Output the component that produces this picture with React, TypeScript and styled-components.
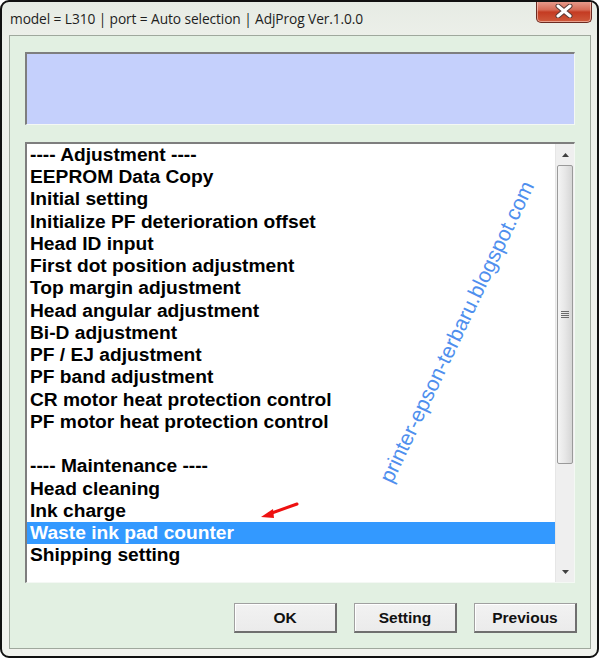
import styled, { createGlobalStyle } from "styled-components";

const GlobalStyle = createGlobalStyle`
    html, body {
        margin: 0;
        padding: 0;
        background: #ffffff;
    }
    body {
        width: 600px;
        height: 659px;
        overflow: hidden;
        font-family: "Liberation Sans", Arial, sans-serif;
    }
`;

type Row = { label: string; selected?: boolean };

const rows: Row[] = [
    { label: "---- Adjustment ----" },
    { label: "EEPROM Data Copy" },
    { label: "Initial setting" },
    { label: "Initialize PF deterioration offset" },
    { label: "Head ID input" },
    { label: "First dot position adjustment" },
    { label: "Top margin adjustment" },
    { label: "Head angular adjustment" },
    { label: "Bi-D adjustment" },
    { label: "PF / EJ adjustment" },
    { label: "PF band adjustment" },
    { label: "CR motor heat protection control" },
    { label: "PF motor heat protection control" },
    { label: "" },
    { label: "---- Maintenance ----" },
    { label: "Head cleaning" },
    { label: "Ink charge" },
    { label: "Waste ink pad counter", selected: true },
    { label: "Shipping setting" },
];

export default function App() {
    return (
        <>
            <GlobalStyle />
            <Window>
                <TitleBar>
                    <Title>model = L310 | port = Auto selection | AdjProg Ver.1.0.0</Title>
                    <CloseButton>
                        <svg width="18" height="14" viewBox="0 0 18 14">
                            <path d="M3 2 L15 12 M15 2 L3 12" stroke="#5a3a36" strokeWidth="5" strokeLinecap="round" />
                            <path d="M3 2 L15 12 M15 2 L3 12" stroke="#ffffff" strokeWidth="3" strokeLinecap="round" />
                        </svg>
                    </CloseButton>
                </TitleBar>
                <Client>
                    <StatusBox />
                    <ListBox>
                        <Items>
                            {rows.map((row, i) => (
                                <Item key={i} selected={row.selected}>{row.label || "\u00a0"}</Item>
                            ))}
                        </Items>
                        <ScrollBar>
                            <ArrowButton>
                                <svg width="7" height="4" viewBox="0 0 7 4"><path d="M0 4 L3.5 0 L7 4 Z" fill="#404040" /></svg>
                            </ArrowButton>
                            <Track>
                                <Thumb>
                                    <svg width="8" height="7" viewBox="0 0 8 7">
                                        <path d="M0 0.5 H8 M0 2.5 H8 M0 4.5 H8 M0 6.5 H8" stroke="#6a6a6a" strokeWidth="1" />
                                    </svg>
                                </Thumb>
                            </Track>
                            <ArrowButton>
                                <svg width="7" height="4" viewBox="0 0 7 4"><path d="M0 0 L3.5 4 L7 0 Z" fill="#404040" /></svg>
                            </ArrowButton>
                        </ScrollBar>
                        <Watermark>printer-epson-terbaru.blogspot.com</Watermark>
                        <Pointer width="40" height="18" viewBox="0 0 40 18">
                            <path d="M38 2 L10 12" stroke="#ee1111" strokeWidth="3" strokeLinecap="round" />
                            <path d="M2 15 L14 7 L15 16 Z" fill="#ee1111" />
                        </Pointer>
                    </ListBox>
                    <Buttons>
                        <Button>OK</Button>
                        <Button>Setting</Button>
                        <Button>Previous</Button>
                    </Buttons>
                </Client>
            </Window>
        </>
    );
}

const Window = styled.div`
    box-sizing: border-box;
    width: 599px;
    height: 658px;
    border: 2px solid #111111;
    border-radius: 9px;
    background: linear-gradient(180deg, #e6ebe4 0%, #edf0ea 6%, #f1f3ee 100%);
    display: flex;
    flex-direction: column;
    padding: 0 6px 7px 7px;
    overflow: hidden;
`;

const TitleBar = styled.div`
    height: 33px;
    display: flex;
    align-items: flex-start;
    justify-content: space-between;
    position: relative;
`;

const Title = styled.div`
    font-family: "Open Sans", "Noto Sans", sans-serif;
    font-size: 13.75px;
    color: #1e1e1e;
    padding: 7px 0 0 1px;
    letter-spacing: -0.1px;
    white-space: nowrap;
`;

const CloseButton = styled.div`
    width: 54px;
    height: 22px;
    margin: -2px -1px 0 0;
    border: 1px solid #6b2a22;
    border-top: none;
    border-radius: 0 0 5px 5px;
    background: linear-gradient(180deg, #e9a597 0%, #d66a55 45%, #c43b22 55%, #cf5a3c 100%);
    box-shadow: inset 0 0 0 1px rgba(255, 220, 210, 0.55);
    display: flex;
    align-items: center;
    justify-content: center;
`;

const Client = styled.div`
    flex: 1;
    background: #e2f0e2;
    border: 1px solid #9fa89d;
    padding: 16px 15px 15px 15px;
    display: flex;
    flex-direction: column;
`;

const StatusBox = styled.div`
    height: 73px;
    background: #c5d0fc;
    border-top: 2px solid #7e7e7e;
    border-left: 2px solid #7e7e7e;
    border-bottom: 1px solid #f4f8f4;
    border-right: 1px solid #f4f8f4;
    box-sizing: border-box;
`;

const ListBox = styled.div`
    margin-top: 17px;
    height: 441px;
    box-sizing: border-box;
    background: #ffffff;
    border-top: 2px solid #7e7e7e;
    border-left: 2px solid #7e7e7e;
    border-bottom: 1px solid #f4f8f4;
    border-right: 1px solid #f4f8f4;
    display: flex;
    position: relative;
    overflow: hidden;
`;

const Items = styled.div`
    flex: 1;
`;

const Item = styled.div<{ selected?: boolean }>`
    height: 22.24px;
    line-height: 22.24px;
    padding-left: 3px;
    font-family: "Liberation Sans", Arial, sans-serif;
    font-weight: 700;
    font-size: 19.2px;
    white-space: nowrap;
    color: ${props => props.selected ? "#ffffff" : "#000000"};
    background: ${props => props.selected ? "#3399ff" : "transparent"};
`;

const ScrollBar = styled.div`
    width: 18px;
    background: #efefef;
    border-left: 1px solid #e6e6e6;
    display: flex;
    flex-direction: column;
`;

const ArrowButton = styled.div`
    height: 21px;
    display: flex;
    align-items: center;
    justify-content: center;
`;

const Track = styled.div`
    flex: 1;
    padding: 0 1px;
`;

const Thumb = styled.div`
    height: 299px;
    box-sizing: border-box;
    border: 1px solid #9a9a9a;
    border-radius: 2px;
    background: linear-gradient(90deg, #f4f4f4 0%, #e7e7e7 50%, #d6d6d6 100%);
    display: flex;
    align-items: center;
    justify-content: center;
`;

const Watermark = styled.div`
    position: absolute;
    left: 240px;
    top: 176px;
    width: 380px;
    text-align: center;
    font-family: "Liberation Sans", Arial, sans-serif;
    font-size: 21.2px;
    color: #4f8fee;
    white-space: nowrap;
    transform: rotate(-64.5deg);
    transform-origin: center center;
    pointer-events: none;
`;

const Pointer = styled.svg`
    position: absolute;
    left: 232px;
    top: 358px;
`;

const Buttons = styled.div`
    margin-top: 20px;
    display: flex;
    justify-content: flex-end;
    gap: 17px;
    margin-right: -2px;
`;

const Button = styled.div`
    width: 103px;
    height: 30px;
    box-sizing: border-box;
    background: linear-gradient(180deg, #f2f2f2 0%, #ebebeb 100%);
    border-top: 1px solid #a0a0a0;
    border-left: 1px solid #a0a0a0;
    border-right: 2px solid #6f6f6f;
    border-bottom: 2px solid #6f6f6f;
    box-shadow: inset 1px 1px 0 #ffffff;
    display: flex;
    align-items: center;
    justify-content: center;
    font-family: "Liberation Sans", Arial, sans-serif;
    font-weight: 700;
    font-size: 15.5px;
    color: #111111;
`;
